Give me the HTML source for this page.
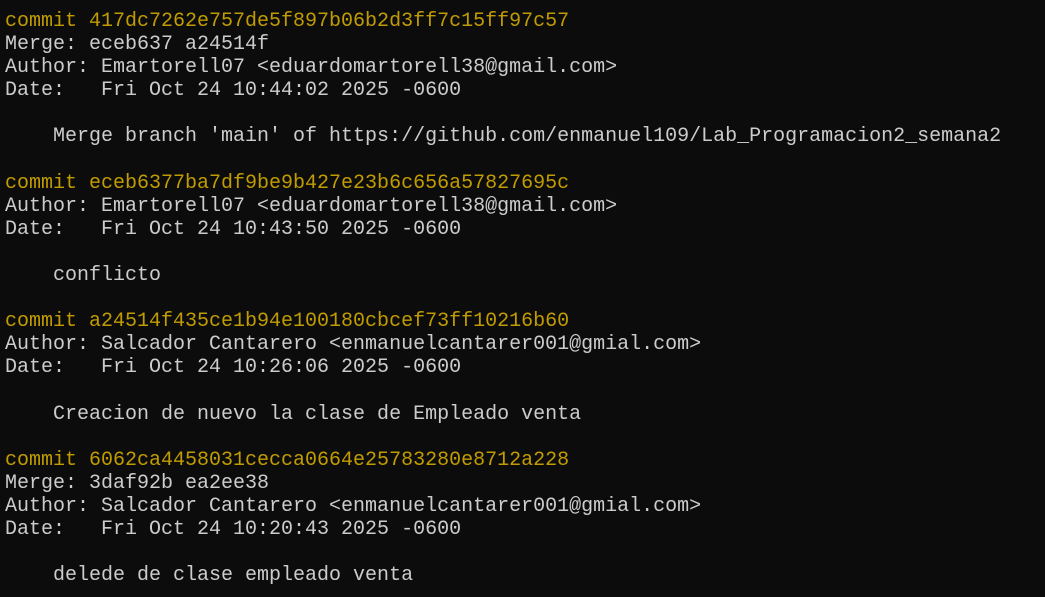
<!DOCTYPE html>
<html><head><meta charset="utf-8"><style>
html,body{margin:0;padding:0;background:#0c0c0c;width:1045px;height:597px;overflow:hidden}
pre{margin:0;padding:10px 0 0 5px;font-family:"Liberation Mono",monospace;font-size:20px;line-height:23.1px;color:#cccccc;white-space:pre}
.y{color:#c19c00}
</style></head><body><pre><span class="y">commit 417dc7262e757de5f897b06b2d3ff7c15ff97c57</span>
Merge: eceb637 a24514f
Author: Emartorell07 &lt;eduardomartorell38@gmail.com&gt;
Date:   Fri Oct 24 10:44:02 2025 -0600

    Merge branch 'main' of https://github.com/enmanuel109/Lab_Programacion2_semana2

<span class="y">commit eceb6377ba7df9be9b427e23b6c656a57827695c</span>
Author: Emartorell07 &lt;eduardomartorell38@gmail.com&gt;
Date:   Fri Oct 24 10:43:50 2025 -0600

    conflicto

<span class="y">commit a24514f435ce1b94e100180cbcef73ff10216b60</span>
Author: Salcador Cantarero &lt;enmanuelcantarer001@gmial.com&gt;
Date:   Fri Oct 24 10:26:06 2025 -0600

    Creacion de nuevo la clase de Empleado venta

<span class="y">commit 6062ca4458031cecca0664e25783280e8712a228</span>
Merge: 3daf92b ea2ee38
Author: Salcador Cantarero &lt;enmanuelcantarer001@gmial.com&gt;
Date:   Fri Oct 24 10:20:43 2025 -0600

    delede de clase empleado venta
</pre></body></html>
